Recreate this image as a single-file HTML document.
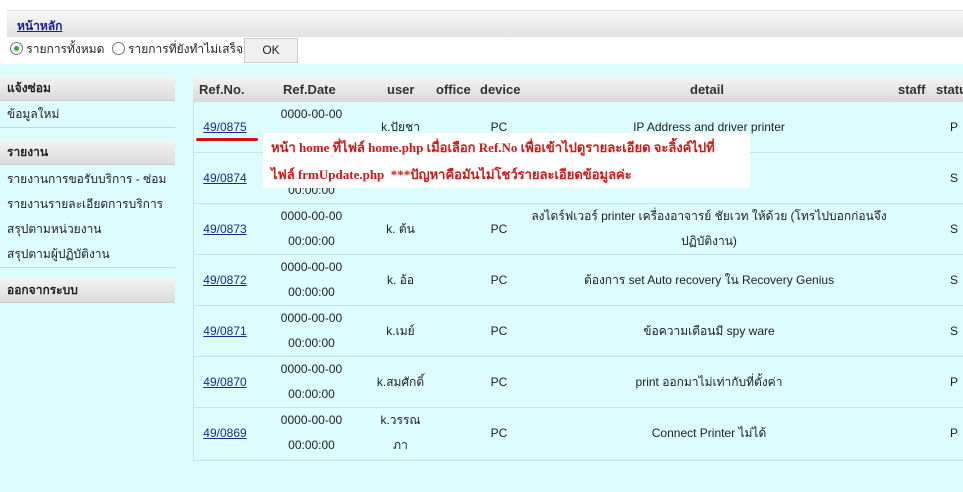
<!DOCTYPE html>
<html><head><meta charset="utf-8"><style>
body{margin:0;width:963px;height:492px;overflow:hidden;background:#fff;font-family:"Liberation Sans","DejaVu Sans",sans-serif;font-size:12px;color:#222;position:relative}
.a{position:absolute}
.cyan{left:0;top:64px;width:963px;height:428px;background:#dcfcfd}
.bar{left:7px;top:10px;width:956px;height:26px;background:linear-gradient(#f6f6f6,#e2e2e2);border-top:1px solid #ddd}
.bar a{position:absolute;left:10px;top:6px;color:#1a1aa0;font-weight:bold;text-decoration:underline;font-size:12px}
.mh{left:0;width:175px;height:25px;background:linear-gradient(#f4f4f4,#dcdcdc);font-weight:bold;line-height:25px;padding-left:7px;box-sizing:border-box;border-bottom:1px solid #ccc}
.mi{left:0;width:175px;background:#dcfcfd;border-bottom:1px solid #bcdde0;box-sizing:border-box;padding-left:7px}
.mi div{height:25px;line-height:25px}
.tbl{left:193px;top:77px;width:770px;height:383px;border-left:1px solid #c6e0e4;border-bottom:1px solid #c6e0e4}
.th{left:193px;top:77px;width:770px;height:25px;background:linear-gradient(#f4f4f4,#dadada);font-weight:bold;line-height:25px;color:#333;font-size:13px}
.row{left:194px;width:769px;height:50px;border-bottom:1px solid #c6e0e4}
.c{position:absolute;text-align:center;top:0;height:50px;line-height:25px}
.one{line-height:50px}
a.l{color:#1a2a8a;text-decoration:underline}
</style></head><body>
<div class="a cyan"></div>
<div class="a bar"><a>หน้าหลัก</a></div>
<div class="a" style="left:10px;top:40px;line-height:18px">
<span style="display:inline-block;width:11px;height:11px;border:1px solid #777;border-radius:50%;vertical-align:-2px;position:relative;background:#fff"><span style="position:absolute;left:3px;top:3px;width:5px;height:5px;border-radius:50%;background:#3a3"></span></span> รายการทั้งหมด
<span style="display:inline-block;width:11px;height:11px;border:1px solid #777;border-radius:50%;vertical-align:-2px;background:#fff;margin-left:4px"></span> รายการที่ยังทำไม่เสร็จ
</div>
<div class="a" style="left:244px;top:38px;width:52px;height:23px;background:#f0f0f0;border:1px solid #ccc;text-align:center;line-height:23px">OK</div>

<div class="a mh" style="top:76px">แจ้งซ่อม</div>
<div class="a mi" style="top:102px"><div>ข้อมูลใหม่</div></div>
<div class="a mh" style="top:140px">รายงาน</div>
<div class="a mi" style="top:166px;padding-top:1px"><div>รายงานการขอรับบริการ - ซ่อม</div><div>รายงานรายละเอียดการบริการ</div><div>สรุปตามหน่วยงาน</div><div>สรุปตามผู้ปฏิบัติงาน</div></div>
<div class="a mh" style="top:278px">ออกจากระบบ</div>

<div class="a tbl"></div>
<div class="a th">
<span class="a" style="left:6px">Ref.No.</span><span class="a" style="left:90px">Ref.Date</span><span class="a" style="left:194px">user</span><span class="a" style="left:243px">office</span><span class="a" style="left:287px">device</span><span class="a" style="left:497px">detail</span><span class="a" style="left:705px">staff</span><span class="a" style="left:743px">status</span>
</div>

<div class="a row" style="top:102px"><div class="c one" style="left:0;width:62px"><a class="l">49/0875</a></div><div class="c" style="left:70px;width:95px">0000-00-00<br>00:00:00</div><div class="c one" style="left:165px;width:83px">k.ปัยชา</div><div class="c one" style="left:285px;width:40px">PC</div><div class="c one" style="left:325px;width:380px">IP Address and driver printer</div><div class="c one" style="left:750px;width:20px">P</div></div>
<div class="a row" style="top:153px"><div class="c one" style="left:0;width:62px"><a class="l">49/0874</a></div><div class="c" style="left:70px;width:95px">0000-00-00<br>00:00:00</div><div class="c one" style="left:750px;width:20px">S</div></div>
<div class="a row" style="top:204px"><div class="c one" style="left:0;width:62px"><a class="l">49/0873</a></div><div class="c" style="left:70px;width:95px">0000-00-00<br>00:00:00</div><div class="c one" style="left:165px;width:83px">k. ต้น</div><div class="c one" style="left:285px;width:40px">PC</div><div class="c" style="left:325px;width:380px">ลงไดร์ฟเวอร์ printer เครื่องอาจารย์ ชัยเวท ให้ด้วย (โทรไปบอกก่อนจึง<br>ปฏิบัติงาน)</div><div class="c one" style="left:750px;width:20px">S</div></div>
<div class="a row" style="top:255px"><div class="c one" style="left:0;width:62px"><a class="l">49/0872</a></div><div class="c" style="left:70px;width:95px">0000-00-00<br>00:00:00</div><div class="c one" style="left:165px;width:83px">k. อ้อ</div><div class="c one" style="left:285px;width:40px">PC</div><div class="c one" style="left:325px;width:380px">ต้องการ set Auto recovery ใน Recovery Genius</div><div class="c one" style="left:750px;width:20px">S</div></div>
<div class="a row" style="top:306px"><div class="c one" style="left:0;width:62px"><a class="l">49/0871</a></div><div class="c" style="left:70px;width:95px">0000-00-00<br>00:00:00</div><div class="c one" style="left:165px;width:83px">k.เมย์</div><div class="c one" style="left:285px;width:40px">PC</div><div class="c one" style="left:325px;width:380px">ข้อความเตือนมี spy ware</div><div class="c one" style="left:750px;width:20px">S</div></div>
<div class="a row" style="top:357px"><div class="c one" style="left:0;width:62px"><a class="l">49/0870</a></div><div class="c" style="left:70px;width:95px">0000-00-00<br>00:00:00</div><div class="c one" style="left:165px;width:83px">k.สมศักดิ์</div><div class="c one" style="left:285px;width:40px">PC</div><div class="c one" style="left:325px;width:380px">print ออกมาไม่เท่ากับที่ตั้งค่า</div><div class="c one" style="left:750px;width:20px">P</div></div>
<div class="a row" style="top:408px;border-bottom:none"><div class="c one" style="left:0;width:62px"><a class="l">49/0869</a></div><div class="c" style="left:70px;width:95px">0000-00-00<br>00:00:00</div><div class="c" style="left:165px;width:83px">k.วรรณ<br>ภา</div><div class="c one" style="left:285px;width:40px">PC</div><div class="c one" style="left:325px;width:380px">Connect Printer ไม่ได้</div><div class="c one" style="left:750px;width:20px">P</div></div>

<div class="a" style="left:196px;top:138px;width:62px;height:3px;background:#d01010;border-radius:2px"></div>
<div class="a" style="left:263px;top:133px;width:487px;height:55px;background:#fff;color:#d01818;font-family:'Liberation Serif',serif;font-weight:bold;font-size:13px;line-height:27px;padding-left:8px;box-sizing:border-box;padding-top:1px">หน้า home ที่ไฟล์ home.php เมื่อเลือก Ref.No เพื่อเข้าไปดูรายละเอียด จะลิ้งค์ไปที่<br>ไฟล์ frmUpdate.php &nbsp;***ปัญหาคือมันไม่โชว์รายละเอียดข้อมูลค่ะ</div>
</body></html>
